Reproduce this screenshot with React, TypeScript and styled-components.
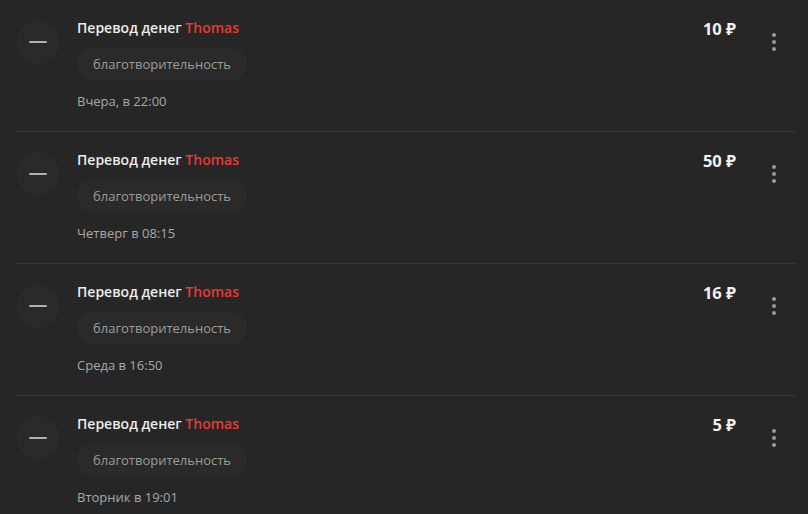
import React from "react";
import styled, { createGlobalStyle } from "styled-components";

const Global = createGlobalStyle`
  html, body { margin: 0; padding: 0; background: #262626; }
  body { font-family: "Open Sans", "Noto Sans", sans-serif; color: #e8e8e8; }
`;

const List = styled.div`
  display: flex;
  flex-direction: column;
  padding: 0 12px 0 16px;
`;

const Row = styled.div`
  display: flex;
  align-items: flex-start;
  padding: 18px 12px 21px 0;
  border-bottom: 1px solid #363636;
  &:last-child { border-bottom: none; }
`;

const IconCircle = styled.div`
  flex: none;
  width: 44px;
  height: 44px;
  margin-top: 2px;
  border-radius: 50%;
  background: #292929;
  display: flex;
  align-items: center;
  justify-content: center;
`;

const Dash = styled.div`
  width: 18px;
  height: 2px;
  background: #b0b0b0;
  border-radius: 1px;
`;

const Body = styled.div`
  flex: 1;
  margin-left: 17px;
  display: flex;
  flex-direction: column;
  align-items: flex-start;
`;

const Title = styled.div`
  font-size: 14px;
  font-weight: 600;
  line-height: 20px;
  color: #ececec;
`;

const Name = styled.span`
  color: #e53a3a;
`;

const Chip = styled.div`
  margin-top: 9px;
  height: 33px;
  padding: 0 16px;
  border-radius: 16px;
  background: #2a2a2a;
  color: #9c9c9c;
  font-size: 13px;
  display: flex;
  align-items: center;
`;

const DateText = styled.div`
  margin-top: 12px;
  font-size: 13px;
  line-height: 18px;
  color: #a8a8a8;
`;

const Amount = styled.div`
  font-size: 16.5px;
  font-weight: 700;
  line-height: 22px;
  color: #f2f2f2;
  white-space: nowrap;
`;

const Menu = styled.div`
  flex: none;
  width: 20px;
  height: 44px;
  margin: 2px 0 0 28px;
  display: flex;
  flex-direction: column;
  align-items: center;
  justify-content: center;
  gap: 3px;
`;

const Dot = styled.span`
  width: 4px;
  height: 4px;
  border-radius: 50%;
  background: #9a9a9a;
`;

const items = [
  { amount: "10", date: "Вчера, в 22:00" },
  { amount: "50", date: "Четверг в 08:15" },
  { amount: "16", date: "Среда в 16:50" },
  { amount: "5", date: "Вторник в 19:01" },
];

export default function App() {
  return (
    <>
      <Global />
      <List>
        {items.map((it, i) => (
          <Row key={i}>
            <IconCircle>
              <Dash />
            </IconCircle>
            <Body>
              <Title>
                Перевод денег <Name>Thomas</Name>
              </Title>
              <Chip>благотворительность</Chip>
              <DateText>{it.date}</DateText>
            </Body>
            <Amount>{it.amount} ₽</Amount>
            <Menu>
              <Dot />
              <Dot />
              <Dot />
            </Menu>
          </Row>
        ))}
      </List>
    </>
  );
}
